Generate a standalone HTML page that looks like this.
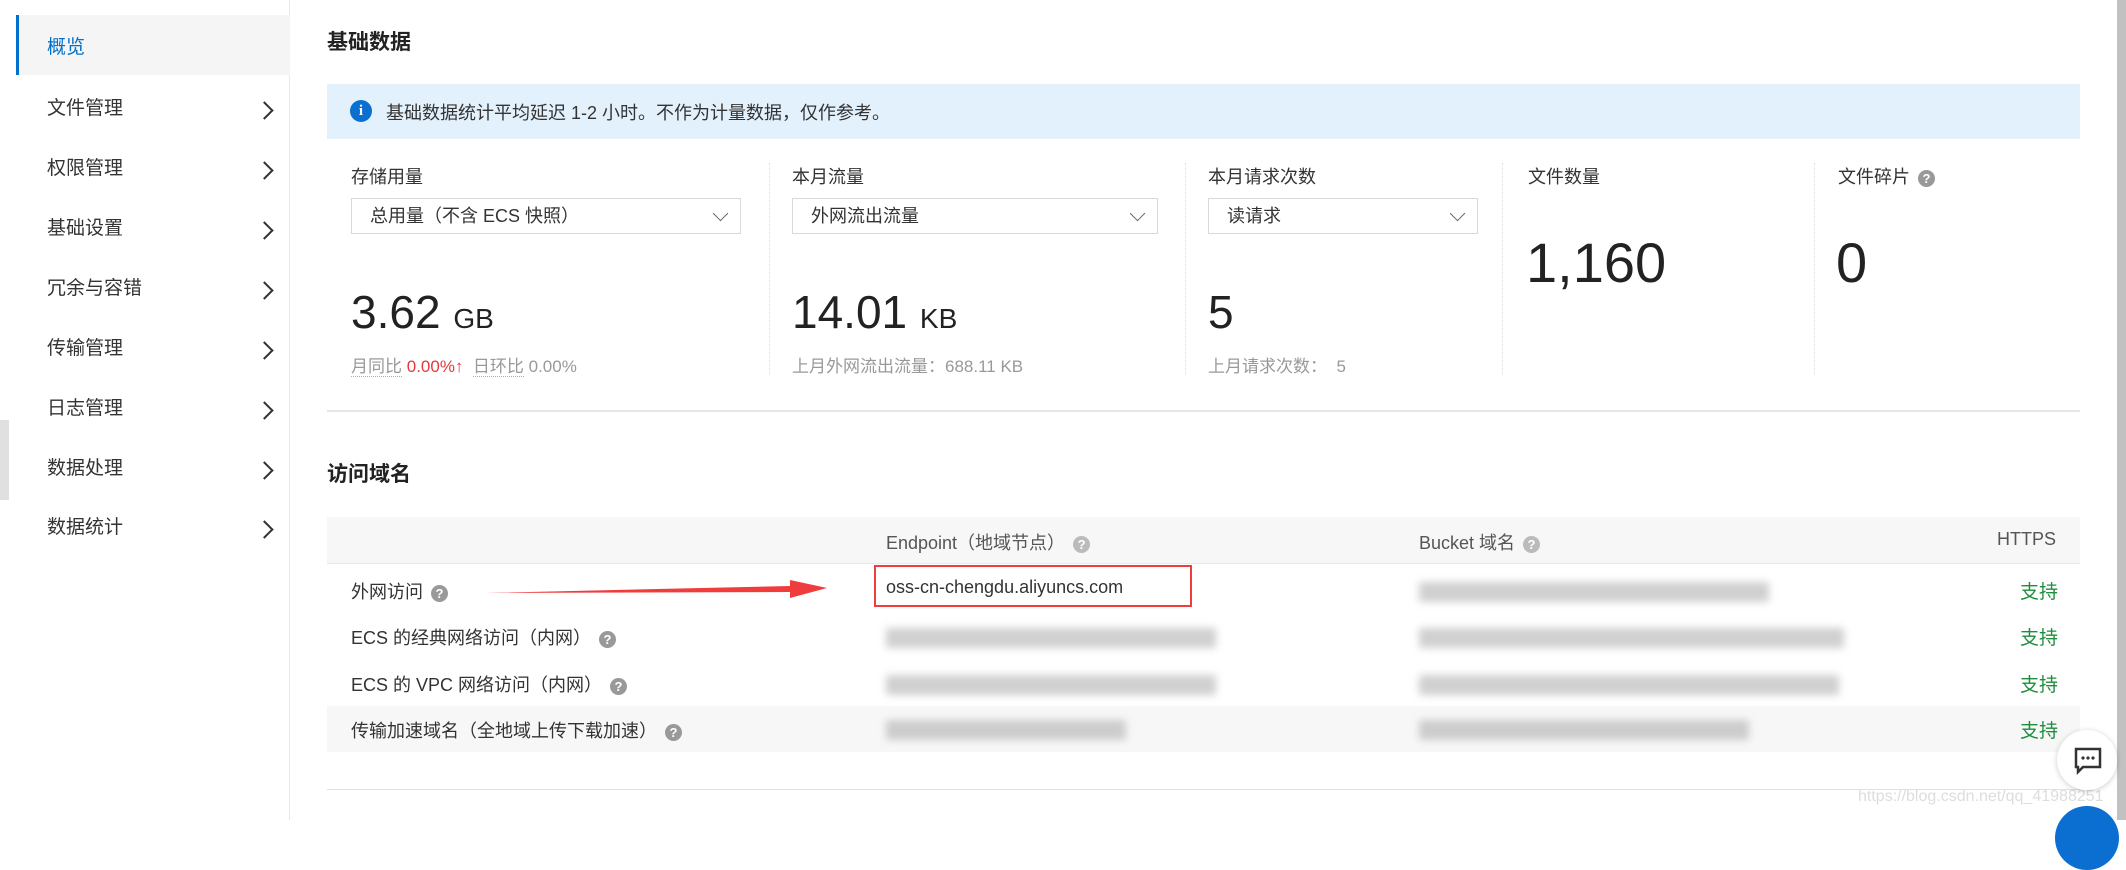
<!DOCTYPE html>
<html><head><meta charset="utf-8"><style>
*{margin:0;padding:0;box-sizing:border-box}
body{width:2126px;height:820px;overflow:hidden;background:#fff;font-family:"Liberation Sans","Noto Sans CJK SC",sans-serif;color:#333;position:relative}
.a{position:absolute;white-space:nowrap}
.side{position:absolute;left:0;top:0;width:290px;height:820px;border-right:1px solid #e8e8e8}
.nav{position:absolute;left:47px;font-size:19px;color:#333;line-height:24px}
.chev{position:absolute;left:258px;width:13px;height:13px;border-right:2px solid #333;border-top:2px solid #333;transform:rotate(45deg)}
.lbl{font-size:18px;color:#333}
.sel{position:absolute;top:198px;height:36px;border:1px solid #d9d9d9;font-size:18px;line-height:34px;padding-left:18px;color:#333}
.sel:after{content:"";position:absolute;right:14px;top:9px;width:10px;height:10px;border-right:1.5px solid #666;border-bottom:1.5px solid #666;transform:rotate(45deg)}
.vsep{position:absolute;top:163px;height:212px;border-left:1px dotted #ddd}
.sub{font-size:17px;color:#999}
.q{display:inline-block;width:17px;height:17px;border-radius:50%;background:#999;color:#fff;font-size:13px;line-height:17px;text-align:center;font-weight:bold;vertical-align:middle;margin-left:8px}
.td{font-size:18px;color:#333}
.g{color:#1e8e3e;font-size:19px}
.blur{position:absolute;height:20px;background:#aaa;filter:blur(4px);opacity:.55}
</style></head><body>
<div class="a" style="left:0;top:420px;width:9px;height:80px;background:#e0e0e0"></div>
<div class="side">
<div class="a" style="left:16px;top:15px;width:274px;height:60px;background:#f5f5f5;border-left:3px solid #0070cc"></div>
<div class="nav" style="top:36px;color:#0070cc">概览</div>
<div class="nav" style="top:97px">文件管理</div><div class="chev" style="top:104px"></div>
<div class="nav" style="top:157px">权限管理</div><div class="chev" style="top:164px"></div>
<div class="nav" style="top:217px">基础设置</div><div class="chev" style="top:224px"></div>
<div class="nav" style="top:277px">冗余与容错</div><div class="chev" style="top:284px"></div>
<div class="nav" style="top:337px">传输管理</div><div class="chev" style="top:344px"></div>
<div class="nav" style="top:397px">日志管理</div><div class="chev" style="top:404px"></div>
<div class="nav" style="top:457px">数据处理</div><div class="chev" style="top:464px"></div>
<div class="nav" style="top:516px">数据统计</div><div class="chev" style="top:523px"></div>
</div>

<div class="a" style="left:327px;top:26px;font-size:21px;font-weight:bold;color:#222">基础数据</div>
<div class="a" style="left:327px;top:84px;width:1753px;height:55px;background:#e3f1fc"></div>
<div class="a" style="left:350px;top:100px;width:22px;height:22px;border-radius:50%;background:#0a6fd1;color:#fff;font-size:15px;font-weight:bold;text-align:center;line-height:22px;font-family:'Liberation Serif',serif">i</div>
<div class="a" style="left:386px;top:99px;font-size:18px;color:#333">基础数据统计平均延迟 1-2 小时。不作为计量数据，仅作参考。</div>

<div class="vsep" style="left:769px"></div><div class="vsep" style="left:1185px"></div><div class="vsep" style="left:1502px"></div><div class="vsep" style="left:1814px"></div>

<div class="a lbl" style="left:351px;top:163px">存储用量</div>
<div class="sel" style="left:351px;width:390px">总用量（不含 ECS 快照）</div>
<div class="a" style="left:351px;top:285px;font-size:46px;color:#222">3.62 <span style="font-size:28px">GB</span></div>
<div class="a sub" style="left:351px;top:352px"><span style="border-bottom:1px dotted #aaa">月同比</span> <span style="color:#e4393c">0.00%↑</span> &nbsp;<span style="border-bottom:1px dotted #aaa">日环比</span> 0.00%</div>

<div class="a lbl" style="left:792px;top:163px">本月流量</div>
<div class="sel" style="left:792px;width:366px">外网流出流量</div>
<div class="a" style="left:792px;top:285px;font-size:46px;color:#222">14.01 <span style="font-size:28px">KB</span></div>
<div class="a sub" style="left:792px;top:352px">上月外网流出流量：688.11 KB</div>

<div class="a lbl" style="left:1208px;top:163px">本月请求次数</div>
<div class="sel" style="left:1208px;width:270px">读请求</div>
<div class="a" style="left:1208px;top:285px;font-size:46px;color:#222">5</div>
<div class="a sub" style="left:1208px;top:352px">上月请求次数：&nbsp; 5</div>

<div class="a lbl" style="left:1528px;top:163px">文件数量</div>
<div class="a" style="left:1526px;top:230px;font-size:56px;color:#222">1,160</div>
<div class="a lbl" style="left:1838px;top:163px">文件碎片<span class="q">?</span></div>
<div class="a" style="left:1836px;top:230px;font-size:56px;color:#222">0</div>

<div class="a" style="left:327px;top:410px;width:1753px;height:2px;background:#e6e6e6"></div>
<div class="a" style="left:327px;top:458px;font-size:21px;font-weight:bold;color:#222">访问域名</div>

<div class="a" style="left:327px;top:517px;width:1753px;height:47px;background:#f7f7f7;border-bottom:1px solid #e8e8e8"></div>
<div class="a" style="left:327px;top:706px;width:1753px;height:46px;background:#f7f7f7"></div>
<div class="a td" style="left:886px;top:529px;color:#555">Endpoint（地域节点）<span class="q" style="background:#bbb">?</span></div>
<div class="a td" style="left:1419px;top:529px;color:#555">Bucket 域名<span class="q" style="background:#bbb">?</span></div>
<div class="a td" style="left:1997px;top:529px;color:#555">HTTPS</div>

<div class="a td" style="left:351px;top:578px">外网访问<span class="q">?</span></div>
<div class="a td" style="left:351px;top:624px">ECS 的经典网络访问（内网）<span class="q">?</span></div>
<div class="a td" style="left:351px;top:671px">ECS 的 VPC 网络访问（内网）<span class="q">?</span></div>
<div class="a td" style="left:351px;top:717px">传输加速域名（全地域上传下载加速）<span class="q">?</span></div>

<div class="a" style="left:874px;top:565px;width:318px;height:42px;border:2px solid #f03c3c"></div>
<div class="a td" style="left:886px;top:577px">oss-cn-chengdu.aliyuncs.com</div>
<svg class="a" style="left:480px;top:578px" width="350" height="24"><polygon points="5,15 310,8 310,2 347,10 310,20 310,14" fill="#f03c3c"/></svg>

<div class="blur" style="left:886px;top:628px;width:330px"></div>
<div class="blur" style="left:886px;top:675px;width:330px"></div>
<div class="blur" style="left:886px;top:720px;width:240px"></div>
<div class="blur" style="left:1419px;top:582px;width:350px"></div>
<div class="blur" style="left:1419px;top:628px;width:425px"></div>
<div class="blur" style="left:1419px;top:675px;width:420px"></div>
<div class="blur" style="left:1419px;top:720px;width:330px"></div>

<div class="a g" style="left:2020px;top:577px">支持</div>
<div class="a g" style="left:2020px;top:623px">支持</div>
<div class="a g" style="left:2020px;top:670px">支持</div>
<div class="a g" style="left:2020px;top:716px">支持</div>

<div class="a" style="left:327px;top:789px;width:1753px;height:1px;background:#e0e0e0"></div>
<div class="a" style="left:1858px;top:788px;font-size:16px;color:#ddd">https://blog.csdn.net/qq_41988251</div>
<div class="a" style="left:2117px;top:0;width:9px;height:820px;background:#c1c1c1"></div>
<div class="a" style="left:2055px;top:806px;width:64px;height:64px;border-radius:50%;background:#0a6fd1"></div>
<div class="a" style="left:2057px;top:730px;width:60px;height:60px;border-radius:50%;background:#fff;box-shadow:0 1px 6px rgba(0,0,0,.2)"></div>
<svg class="a" style="left:2074px;top:747px" width="28" height="28"><path d="M2 2H26V20H9L4 25V20H2Z" fill="none" stroke="#333" stroke-width="2.5"/><circle cx="9" cy="11" r="1.6" fill="#333"/><circle cx="14" cy="11" r="1.6" fill="#333"/><circle cx="19" cy="11" r="1.6" fill="#333"/></svg>
</body></html>
